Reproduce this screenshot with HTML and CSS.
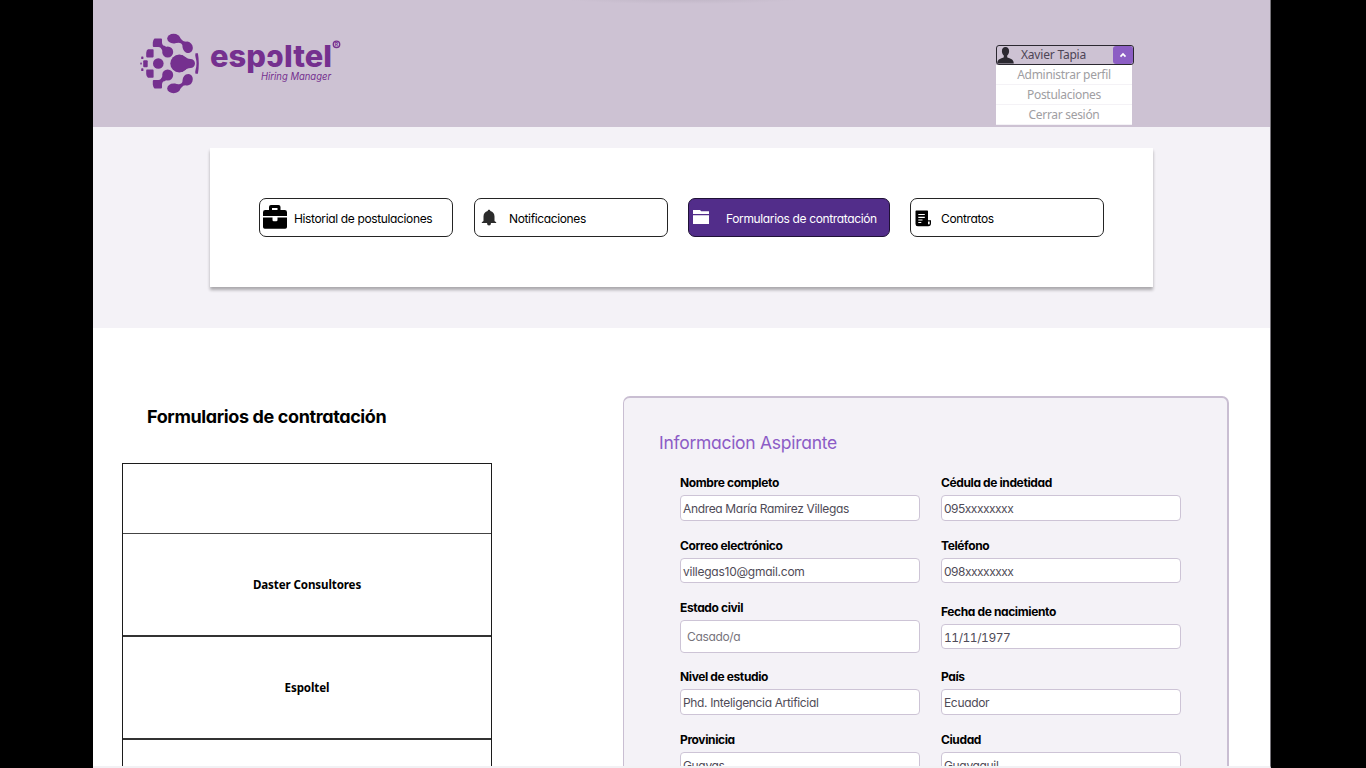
FILE: index.html
```html
<!DOCTYPE html>
<html lang="es">
<head>
<meta charset="utf-8">
<title>Espoltel Hiring Manager</title>
<link rel="stylesheet" href="styles.css">
</head>
<body>
<div class="screen">
  <header class="header">
    <svg class="logo" width="206" height="64" viewBox="0 0 206 64" role="img" aria-label="Espoltel Hiring Manager">
      <g fill="#75308f">
        <circle cx="39.300" cy="30.500" r="9"/><path d="M42 21.900Q47 26 50.500 26a4.500 4.500 0 0 1 0 9Q47 35 42 39.100z"/>
        <circle cx="18.300" cy="30.500" r="5.300"/>
        <rect x="3.200" y="27.200" width="4.500" height="7" rx="1"/>
        <rect x="1.200" y="23.400" width="2.200" height="2.700" rx=".6"/><rect x="1.200" y="35.300" width="2.200" height="2.700" rx=".6"/><rect x="0.300" y="29.400" width="1.500" height="2.200" rx=".5"/>
        <path d="M8 16.200h4.800q.8 0 .8.800v6.600q0 .8-.8.800H7q-.8 0-.8-.8V20q.2-3 1.800-3.800zM8 44.800h4.800q.8 0 .8-.8v-6.600q0-.8-.8-.8H7q-.8 0-.8.800V41q.2 3 1.800 3.800z"/>
        <g id="arm">
          <path d="M14.500 5.500h6.500q1 0 1 1v3.300q.3 3 3.800 4.200l-3.500 4q-1-4-4-4h-4.500q-1 0-1-1V9.500q.4-3 1.700-4z"/>
          <circle cx="27.700" cy="19" r="5.500"/>
          <path d="M24 12.500l6 4-5 6.500q-1-6-4-8z"/>
          <ellipse cx="33.600" cy="5.600" rx="6.400" ry="4.900"/>
          <path d="M37 1.700q3 2 4 4.300 1.800 2.800 5.500 3l-3.500 5.500q-.5-4-3-4.500-2-.5-6 .3z"/>
          <ellipse cx="47.700" cy="14.300" rx="5" ry="5.900" transform="rotate(-20 47.700 14.300)"/>
        </g>
        <use href="#arm" transform="matrix(1 0 0 -1 0 61)"/>
        <path d="M55.500 20.200h2.400q.9 5 .9 10.300t-.9 10.300h-2.400q-.6-1.800.1-4.300.9-3 .9-6t-.9-6q-.7-2.500-.1-4.300z"/>
      </g>
      <text class="wordmark" x="70" y="33.500" textLength="122" lengthAdjust="spacingAndGlyphs">espɔltel</text>
      <text class="tagline" x="121" y="47" textLength="70" lengthAdjust="spacingAndGlyphs">Hiring Manager</text>
      <circle cx="196.500" cy="11.300" r="3.200" fill="none" stroke="#75308f" stroke-width="1.400"/>
      <text class="reg" x="194.800" y="13.200">R</text>
    </svg>
    <div class="account">
      <div class="account-toggle">
        <svg class="avatar" width="18" height="18" viewBox="0 0 18 18"><path d="M8.500 1C6.200 1 4.800 2.700 4.900 5.200c0 1.900.9 3.500 1.900 4.300v1.700C5 12.300.3 12.600.3 17v.6h16.400V17c0-4.400-4.700-4.700-6.500-5.800V9.500c1-.8 1.900-2.400 1.900-4.300C12.200 2.700 10.800 1 8.500 1z" fill="#2b2830"/></svg>
        <span class="account-name">Xavier Tapia</span>
        <span class="caret"><svg width="8" height="6" viewBox="0 0 8 6"><path d="M1.500 4.600 4 2l2.500 2.600" fill="none" stroke="#fff" stroke-width="1.700"/></svg></span>
      </div>
      <ul class="account-menu"><li>Administrar perfil</li><li>Postulaciones</li><li>Cerrar sesión</li></ul>
    </div>
  </header>
  <section class="band">
    <nav class="card">
      <a class="tab tab-history"><svg width="26" height="26" viewBox="0 0 26 26"><path d="M7 6V3q0-2 2-2h7.500q2 0 2 2v3h4.300q2.200 0 2.200 2.200V12H1V8.200Q1 6 3.200 6zm3 0h5.500V4H10zM1 13.500h9.500V16q0 1.300 1.300 1.300h2.400q1.300 0 1.300-1.300v-2.500H25V23q0 1.800-1.800 1.800H2.800Q1 24.800 1 23z"/></svg><span>Historial de postulaciones</span></a>
      <a class="tab tab-alerts"><svg width="16" height="18" viewBox="0 0 16 18"><path fill="#2b2b2b" d="M8 .8c.8 0 1.300.5 1.300 1.300 2.700.7 4.200 2.800 4.200 5.500v4.400l1.700 1.200V14H.8v-.8l1.700-1.200V7.600c0-2.700 1.500-4.800 4.200-5.500C6.700 1.300 7.200.8 8 .8zM6 14h4q0 2.500-2 2.500T6 14z"/></svg><span>Notificaciones</span></a>
      <a class="tab tab-forms"><svg width="16" height="14" viewBox="0 0 16 14"><path fill="#fff" d="M0 0h7l1.200 1.200H16V4H0zM0 5.300h16V14H0z"/></svg><span>Formularios de contratación</span></a>
      <a class="tab tab-contracts"><svg width="17" height="17" viewBox="0 0 17 17"><path d="M1.300.5h11Q13 .5 13 1.300V10.300h3v3q0 2.900-2.800 2.900H2.800Q.5 16.200.5 13.900V1.300Q.5.500 1.300.5z"/><path d="M3.300 4.500h6.500M3.300 7.300h6.500M3.300 10h4.200" stroke="#fff" stroke-width="1.200"/><path d="M3.300 12.500h3" stroke="#fff"/><path fill="#fff" d="M13 11.600h1.700v2q0 .9-.85.9t-.85-.9z"/></svg><span>Contratos</span></a>
    </nav>
  </section>
  <main class="main">
    <section class="companies">
      <h1>Formularios de contratación</h1>
      <div class="company-list">
        <div class="company company-head"></div>
        <div class="company">Daster Consultores</div>
        <div class="company">Espoltel</div>
        <div class="company"></div>
      </div>
    </section>
    <section class="panel">
      <h2>Informacion Aspirante</h2>
      <div class="fields">
        <div class="field"><label>Nombre completo</label><div class="input">Andrea María Ramirez Villegas</div></div>
        <div class="field"><label>Cédula de indetidad</label><div class="input masked">095xxxxxxxx</div></div>
        <div class="field"><label>Correo electrónico</label><div class="input email">villegas10@gmail.com</div></div>
        <div class="field"><label>Teléfono</label><div class="input masked">098xxxxxxxx</div></div>
        <div class="field"><label>Estado civil</label><div class="input select">Casado/a</div></div>
        <div class="field"><label>Fecha de nacimiento</label><div class="input date">11/11/1977</div></div>
        <div class="field"><label>Nivel de estudio</label><div class="input">Phd. Inteligencia Artificial</div></div>
        <div class="field"><label>País</label><div class="input">Ecuador</div></div>
        <div class="field"><label>Provinicia</label><div class="input">Guayas</div></div>
        <div class="field"><label>Ciudad</label><div class="input">Guayaquil</div></div>
      </div>
    </section>
  </main>
</div>
</body>
</html>
```
FILE: styles.css
```css
* { box-sizing: border-box; }
body {
  margin: 0;
  height: 768px;
  overflow: hidden;
  background: #000;
  font-family: Inter, "Liberation Sans", sans-serif;
  font-size: 12px;
  letter-spacing: -0.36px;
  font-feature-settings: "cv11";
  color: #000;
}
.screen {
  width: 1178px;
  height: 768px;
  margin-left: 93px;
  display: flex;
  flex-direction: column;
  overflow: hidden;
  background: #fff;
  border-right: 1px solid #77747a;
  border-bottom: 2px solid #f2f1f4;
}
.header {
  height: 127px;
  flex: none;
  display: flex;
  justify-content: space-between;
  align-items: flex-start;
  padding: 33px 136px 0 47px;
  background: #cdc2d3 radial-gradient(ellipse 118px 5px at 590px -1px, #c0b6c6, #cdc2d3);
}
.logo { flex: none; }
.wordmark { font-size: 30px; font-weight: 800; fill: #75308f; letter-spacing: 0; }
.tagline { font-size: 10.5px; font-style: italic; fill: #75308f; letter-spacing: 0; }
.reg { font-size: 5px; font-weight: 700; fill: #75308f; }
.account {
  width: 138px;
  margin-top: 12px;
  font-family: "Noto Sans", sans-serif;
  font-size: 12px;
  letter-spacing: -0.3px;
}
.account-toggle {
  height: 20px;
  display: flex;
  align-items: center;
  border: 1px solid #2b2830;
  border-radius: 3px;
  color: #4d4556;
}
.account-name { flex: 1; padding: 0 0 2px 6px; letter-spacing: -0.2px; }
.caret {
  width: 20px;
  height: 18px;
  display: flex;
  align-items: center;
  justify-content: center;
  border-radius: 3px;
  background: #8c5ec4;
}
.account-menu {
  width: 136px;
  margin: 0;
  padding: 0;
  list-style: none;
  background: #fff;
  color: #a09ea2;
  text-align: center;
}
.account-menu li { height: 20px; line-height: 20px; border-bottom: 1px solid #f4f2f6; }
.band {
  height: 201px;
  flex: none;
  padding: 21px 0 0 117px;
  background: #f4f2f7;
}
.card {
  width: 943px;
  height: 139px;
  display: flex;
  padding: 50px 0 0 49px;
  background: #fff;
  box-shadow: 0 3px 3px rgba(0, 0, 0, .3);
}
.tab {
  width: 194px;
  height: 39px;
  margin-right: 21px;
  display: flex;
  align-items: center;
  border: 1px solid #242424;
  border-radius: 7px;
}
.tab span { padding-top: 1px; }
.tab-history { padding-left: 2px; gap: 6px; }
.tab-history svg { margin-bottom: 1px; }
.tab-alerts { padding-left: 6px; gap: 12px; margin-right: 20px; }
.tab-forms { width: 202px; padding-left: 4px; gap: 17px; margin-right: 20px; background: #522d8a; color: #fff; border-color: #1f1136; }
.tab-forms svg { margin-bottom: 2px; }
.tab-contracts { padding-left: 4px; gap: 9px; }
.tab-contracts svg { margin-top: 2px; }
.main { flex: 1; min-height: 0; display: flex; align-items: flex-start; padding-left: 29px; }
.companies { width: 370px; flex: none; padding-top: 76px; }
h1 { margin: 0 0 33px 25px; font-size: 18px; line-height: 26px; font-weight: 650; letter-spacing: -0.38px; white-space: nowrap; }
.company-list { border: 1px solid #1c1c1c; }
.company {
  height: 103.3px;
  display: flex;
  align-items: center;
  justify-content: center;
  border-bottom: 2px solid #333;
  font: 700 11.6px "Noto Sans", sans-serif;
  letter-spacing: -0.12px;
}
.company-head { height: 70px; border-bottom: 1px solid #444; }
.company-head + .company { height: 102.7px; }
.panel {
  width: 606px;
  height: 520px;
  flex: none;
  margin: 68px 0 0 131px;
  padding: 33px 0 0 35px;
  border: 2px solid #c9bed2;
  border-left-width: 1px;
  border-radius: 7px;
  background: #f4f2f7;
}
h2 { margin: 0 0 20px; font-size: 17.5px; line-height: 24px; font-weight: 400; letter-spacing: -0.28px; color: #8c5cc6; }
.fields { display: grid; grid-template-columns: 240px 240px; gap: 16px 21px; align-items: center; margin-left: 21px; }
.field { display: flex; flex-direction: column; gap: 5px; }
.field label { line-height: 15px; font-weight: 650; letter-spacing: -0.38px; }
.input {
  height: 25.7px;
  padding-left: 2px;
  line-height: 25px;
  border: 1px solid #cdc4d6;
  border-radius: 4px;
  background: #fff;
  color: #4f4b57;
  letter-spacing: -0.34px;
}
.field { min-height: 46.7px; }
.email { letter-spacing: -0.25px; }
.masked { letter-spacing: -0.5px; }
.date { font-feature-settings: "cv11", "tnum"; letter-spacing: -0.45px; }
.select { height: 33px; padding-left: 6px; line-height: 32px; color: #77747c; }
```
